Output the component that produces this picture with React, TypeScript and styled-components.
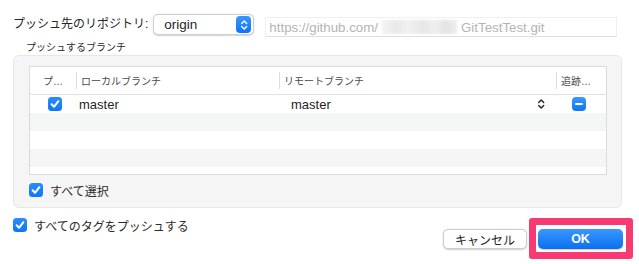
import React from "react";
import styled, { createGlobalStyle } from "styled-components";

const GlobalStyle = createGlobalStyle`
  html, body {
    margin: 0;
    background: #fff;
  }
  body {
    font-family: "Liberation Sans", "Noto Sans CJK JP", sans-serif;
    color: #262626;
  }
`;

const Dialog = styled.div`
  box-sizing: border-box;
  width: 639px;
  height: 264px;
  padding: 14px 16px 0 13px;
  display: flex;
  flex-direction: column;
`;

const TopRow = styled.div`
  display: flex;
  align-items: flex-start;
  height: 23px;
`;

const Label = styled.span`
  font-size: 12px;
  line-height: 21px;
  margin-right: 5px;
  white-space: nowrap;
`;

const PopupButton = styled.div`
  box-sizing: border-box;
  width: 101px;
  height: 21px;
  display: flex;
  align-items: center;
  justify-content: space-between;
  padding: 0 2px 0 10px;
  background: #fff;
  border: 0.5px solid #cfcfcf;
  border-radius: 5px;
  box-shadow: 0 0.5px 1.5px rgba(0, 0, 0, 0.18);
  font-size: 13.5px;
  color: #1f1f1f;
`;

const Stepper = styled.span`
  width: 15px;
  height: 17px;
  border-radius: 4px;
  background: linear-gradient(#3b97ff, #0d74f5);
  display: flex;
  align-items: center;
  justify-content: center;
`;

const UrlField = styled.div`
  box-sizing: border-box;
  margin: 3px 0 0 11px;
  width: 352px;
  height: 20px;
  display: flex;
  align-items: center;
  padding-left: 3px;
  border: 1px solid #efefef;
  border-bottom-color: #dedede;
  font-size: 13.3px;
  color: #b4b4b4;
  white-space: nowrap;
`;

const Blurred = styled.span`
  display: inline-block;
  width: 75px;
  height: 14px;
  margin: 0 4px 0 4px;
  background: linear-gradient(
    90deg,
    #f3f3f3 0%,
    #e9e9e9 20%,
    #f1f1f1 35%,
    #e6e6e6 55%,
    #efefef 70%,
    #e4e4e4 85%,
    #eeeeee 100%
  );
  filter: blur(1px);
`;

const SectionLabel = styled.div`
  font-size: 10px;
  line-height: 12px;
  margin: 5px 0 1px 13px;
  color: #2a2a2a;
`;

const Group = styled.div`
  box-sizing: border-box;
  width: 609px;
  height: 153px;
  padding: 10px 14px 0 15px;
  background: #f5f5f5;
  border: 1px solid #e7e7e7;
  border-radius: 6px;
`;

const Table = styled.div`
  box-sizing: border-box;
  width: 578px;
  height: 109px;
  background: #fff;
  border: 1px solid #dcdcdc;
  overflow: hidden;
`;

const columns = "46px 203px 277px 1fr";

const HeaderRow = styled.div`
  display: grid;
  grid-template-columns: ${columns};
  align-items: center;
  height: 27px;
  border-bottom: 1px solid #e1e1e1;
`;

const HeaderCell = styled.div<{ $center?: boolean; $sep?: boolean }>`
  height: 17px;
  display: flex;
  align-items: center;
  justify-content: ${(p) => (p.$center ? "center" : "flex-start")};
  padding-left: ${(p) => (p.$center ? "0" : "4px")};
  border-left: ${(p) => (p.$sep ? "1px solid #dedede" : "none")};
  font-size: 10px;
  color: #4a4a4a;
  white-space: nowrap;
  overflow: hidden;
`;

const Row = styled.div<{ $striped: boolean }>`
  display: grid;
  grid-template-columns: ${columns};
  align-items: center;
  height: 18px;
  background: ${(p) => (p.$striped ? "#f4f5f5" : "#fff")};
`;

const CheckCell = styled.div`
  display: flex;
  justify-content: center;
  padding-left: 4px;
`;

const TextCell = styled.div`
  padding-left: 3px;
  font-size: 13px;
  color: #1f1f1f;
`;

const RemoteCell = styled.div`
  display: flex;
  align-items: center;
  justify-content: space-between;
  padding: 0 11px 0 12px;
  font-size: 13px;
  color: #1f1f1f;
`;

const MinusCell = styled.div`
  display: flex;
  justify-content: center;
  padding-right: 4px;
`;

const MinusButton = styled.span`
  width: 14px;
  height: 14px;
  border-radius: 4px;
  background: linear-gradient(#3b97ff, #0d74f5);
  display: flex;
  align-items: center;
  justify-content: center;
  &::before {
    content: "";
    width: 8px;
    height: 2px;
    border-radius: 1px;
    background: #fff;
  }
`;

const CheckRow = styled.label<{ $top: number }>`
  display: flex;
  align-items: center;
  gap: 7px;
  margin-top: ${(p) => p.$top}px;
  font-size: 12px;
  height: 14px;
  color: #2a2a2a;
`;

const Box = styled.span`
  width: 14px;
  height: 14px;
  border-radius: 3.5px;
  background: linear-gradient(#2b8cff, #0d76f6);
  display: flex;
  align-items: center;
  justify-content: center;
  flex: none;
`;

const Footer = styled.div`
  display: flex;
  justify-content: space-between;
  align-items: flex-start;
  margin-top: 10px;
`;

const Buttons = styled.div`
  display: flex;
  gap: 11px;
  margin-top: 11px;
`;

const Button = styled.button<{ $primary?: boolean }>`
  box-sizing: border-box;
  height: 20px;
  width: ${(p) => (p.$primary ? "85px" : "84px")};
  border-radius: 5px;
  font-family: inherit;
  font-size: ${(p) => (p.$primary ? "12.5px" : "12px")};
  font-weight: ${(p) => (p.$primary ? "bold" : "normal")};
  color: ${(p) => (p.$primary ? "#fff" : "#222")};
  background: ${(p) =>
    p.$primary ? "linear-gradient(#3a97ff, #0a70f0)" : "#fff"};
  border: ${(p) => (p.$primary ? "none" : "0.5px solid #cdcdcd")};
  box-shadow: 0 0.5px 1.5px rgba(0, 0, 0, 0.2);
  padding: 0;
  position: relative;
`;

const Highlight = styled.span`
  position: absolute;
  top: -11px;
  bottom: -10px;
  left: -9px;
  right: -10px;
  border: 7px solid #f83a72;
  border-radius: 3px;
  pointer-events: none;
`;

function Check() {
  return (
    <Box>
      <svg width="14" height="14" viewBox="0 0 14 14">
        <path
          d="M3.6 7.3 L6 9.8 L10.4 4.2"
          fill="none"
          stroke="#fff"
          strokeWidth="2"
          strokeLinecap="round"
          strokeLinejoin="round"
        />
      </svg>
    </Box>
  );
}

function UpDown({ color, size }: { color: string; size: number }) {
  return (
    <svg width={size * 0.7} height={size} viewBox="0 0 8 12">
      <path
        d="M1.5 4.5 L4 2 L6.5 4.5 M1.5 7.5 L4 10 L6.5 7.5"
        fill="none"
        stroke={color}
        strokeWidth="1.4"
        strokeLinecap="round"
        strokeLinejoin="round"
      />
    </svg>
  );
}

const rows = [0, 1, 2, 3, 4];

export default function App() {
  return (
    <>
      <GlobalStyle />
      <Dialog>
        <TopRow>
          <Label>プッシュ先のリポジトリ:</Label>
          <PopupButton>
            origin
            <Stepper>
              <UpDown color="#fff" size={12} />
            </Stepper>
          </PopupButton>
          <UrlField>
            https://github.com/
            <Blurred />
            GitTestTest.git
          </UrlField>
        </TopRow>
        <SectionLabel>プッシュするブランチ</SectionLabel>
        <Group>
          <Table>
            <HeaderRow>
              <HeaderCell $center>プ…</HeaderCell>
              <HeaderCell $sep>ローカルブランチ</HeaderCell>
              <HeaderCell $sep>リモートブランチ</HeaderCell>
              <HeaderCell $sep>追跡…</HeaderCell>
            </HeaderRow>
            {rows.map((i) =>
              i === 0 ? (
                <Row key={i} $striped={false}>
                  <CheckCell>
                    <Check />
                  </CheckCell>
                  <TextCell>master</TextCell>
                  <RemoteCell>
                    master
                    <UpDown color="#222" size={12} />
                  </RemoteCell>
                  <MinusCell>
                    <MinusButton />
                  </MinusCell>
                </Row>
              ) : (
                <Row key={i} $striped={i % 2 === 1} />
              )
            )}
          </Table>
          <CheckRow $top={8}>
            <Check />
            すべて選択
          </CheckRow>
        </Group>
        <Footer>
          <CheckRow $top={0}>
            <Check />
            すべてのタグをプッシュする
          </CheckRow>
          <Buttons>
            <Button>キャンセル</Button>
            <Button $primary>
              OK
              <Highlight />
            </Button>
          </Buttons>
        </Footer>
      </Dialog>
    </>
  );
}
